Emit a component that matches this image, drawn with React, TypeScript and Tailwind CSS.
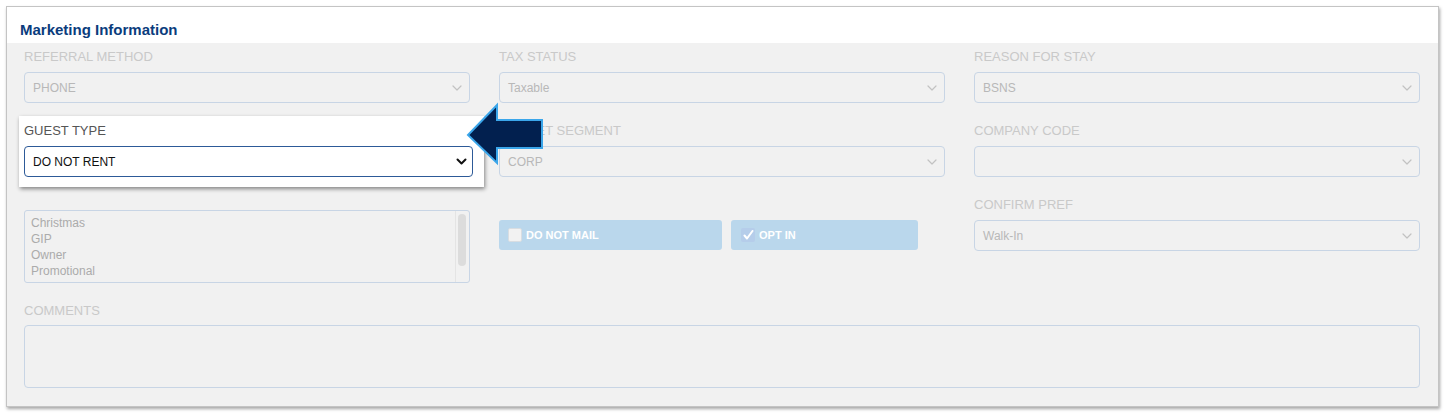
import React from "react";

const font = { fontFamily: '"Liberation Sans", Arial, Helvetica, sans-serif' };

function Chevron({ dark }: { dark?: boolean }) {
  if (dark) {
    return (
      <svg width="11" height="7" viewBox="0 0 11 7">
        <path d="M1.5 1.5 L5.5 5.5 L9.5 1.5" fill="none" stroke="#111" strokeWidth="2" strokeLinecap="round" strokeLinejoin="round" />
      </svg>
    );
  }
  return (
    <svg width="10" height="6" viewBox="0 0 10 6">
      <path d="M1 1 L5 5 L9 1" fill="none" stroke="#c2c2c2" strokeWidth="1.2" strokeLinecap="round" strokeLinejoin="round" />
    </svg>
  );
}

function Label({ children }: { children?: React.ReactNode }) {
  return <div className="h-[16px] text-[13px] leading-[16px] text-[#c9c9c9] whitespace-nowrap">{children}</div>;
}

function Select({ value }: { value?: string }) {
  return (
    <div className="mt-[7px] flex h-[31px] items-center justify-between rounded-[4px] border border-[#c8d5e5] pl-[8px] pr-[7px] text-[12px] text-[#b8b8b8]">
      <span>{value}</span>
      <Chevron />
    </div>
  );
}

function Field({ label, value }: { label: string; value?: string }) {
  return (
    <div>
      <Label>{label}</Label>
      <Select value={value} />
    </div>
  );
}

export default function App() {
  return (
    <div className="min-h-[416px] w-[1446px] bg-white pt-[6px] pl-[6px]" style={font}>
      <div className="w-[1433px] border border-[#c4c4c4] shadow-[1px_2px_3px_rgba(0,0,0,0.35)]">
        <div className="h-[36px] bg-white pl-[13px] pt-[14px] text-[15px] font-bold leading-[18px] text-[#0b3c7d]">
          Marketing Information
        </div>
        <div className="relative bg-[#f1f1f1] pl-[17px] pr-[18px] pt-[6px] pb-[18px]">
          <div className="grid grid-cols-3 gap-x-[29px]">
            <Field label="REFERRAL METHOD" value="PHONE" />
            <Field label="TAX STATUS" value="Taxable" />
            <Field label="REASON FOR STAY" value="BSNS" />
          </div>
          <div className="mt-[20px] grid grid-cols-3 gap-x-[29px]">
            <div />
            <Field label="MARKET SEGMENT" value="CORP" />
            <Field label="COMPANY CODE" value="" />
          </div>
          <div className="mt-[20px] grid grid-cols-3 gap-x-[29px]">
            <div className="mt-[13px] flex h-[73px] overflow-hidden rounded-[3px] border border-[#c8d5e5]">
              <div className="flex-1 pl-[6px] pt-[4px] text-[12px] leading-[16px] text-[#ababab]">
                <div>Christmas</div>
                <div>GIP</div>
                <div>Owner</div>
                <div>Promotional</div>
                <div>Standard</div>
              </div>
              <div className="w-[14px] border-l border-[#e4e4e4] pt-[3px] pl-[2px]">
                <div className="h-[52px] w-[8px] rounded-[4px] bg-[#dcdcdc]" />
              </div>
            </div>
            <div className="mt-[23px] flex gap-[9px]">
              <div className="flex h-[30px] w-[223px] items-center rounded-[3px] bg-[#bad7ec] pl-[9px] text-[11px] font-bold text-white">
                <div className="h-[14px] w-[14px] rounded-[2px] border border-[#d8dde2] bg-[#f2f2f2]" />
                <span className="ml-[4px]">DO NOT MAIL</span>
              </div>
              <div className="flex h-[30px] w-[187px] items-center rounded-[3px] bg-[#bad7ec] pl-[10px] text-[11px] font-bold text-white">
                <div className="flex h-[14px] w-[14px] items-center justify-center rounded-[2px] bg-[#b5cdea]">
                  <svg width="11" height="10" viewBox="0 0 11 10">
                    <path d="M1.5 5.5 L4 8.5 L9.5 1" fill="none" stroke="#fff" strokeWidth="2" strokeLinecap="round" strokeLinejoin="round" />
                  </svg>
                </div>
                <span className="ml-[4px]">OPT IN</span>
              </div>
            </div>
            <Field label="CONFIRM PREF" value="Walk-In" />
          </div>
          <div className="mt-[20px]">
            <Label>COMMENTS</Label>
            <div className="mt-[6px] h-[63px] rounded-[4px] border border-[#c8d5e5]" />
          </div>

          {/* highlighted Guest Type popup */}
          <div className="absolute left-[12px] top-[73px] h-[71px] w-[465px] bg-white pl-[5px] pr-[11px] pt-[7px] shadow-[1px_2px_4px_rgba(0,0,0,0.45)]">
            <div className="h-[16px] text-[13px] leading-[16px] text-[#555]">GUEST TYPE</div>
            <div className="mt-[7px] flex h-[31px] items-center justify-between rounded-[4px] border border-[#2d5a98] pl-[8px] pr-[5px] text-[12px] text-[#111]">
              <span>DO NOT RENT</span>
              <Chevron dark />
            </div>
          </div>

          {/* arrow */}
          <svg className="absolute left-[458px] top-[59px]" width="80" height="64" viewBox="0 0 80 64">
            <path d="M3 33 L32 3 L32 18 L77 18 L77 46 L32 46 L32 61 Z" fill="#02204f" stroke="#3ba6ea" strokeWidth="2" strokeLinejoin="miter" />
          </svg>
        </div>
      </div>
    </div>
  );
}
